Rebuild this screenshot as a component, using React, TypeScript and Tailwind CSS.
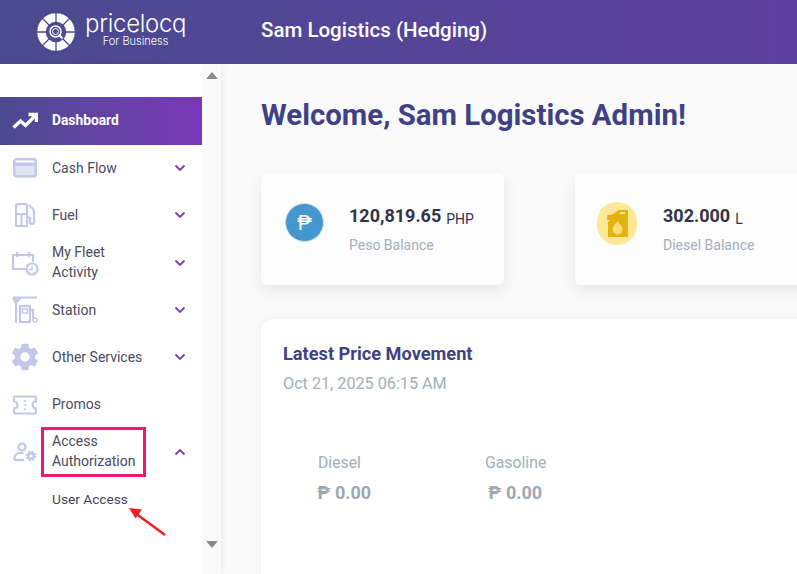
import React from "react";

const ic = "#c3c8e8";
const Chevron = ({ up = false }: { up?: boolean }) => (
  <svg width="12" height="8" viewBox="0 0 12 8" fill="none" stroke="#7a3db5" strokeWidth="1.8" className={up ? "rotate-180" : ""}>
    <path d="M1.5 1.5 6 6l4.5-4.5" />
  </svg>
);

const Trend = () => (
  <svg width="26" height="18" viewBox="0 0 26 18" fill="none" stroke="#fff" strokeWidth="3.4">
    <path d="M1.5 15.5 8.5 9l5 4.5L23 4" />
    <path d="M16.5 2.5H24.500V10" />
  </svg>
);
const CashIcon = () => (
  <svg width="24" height="20" viewBox="0 0 24 20">
    <rect x="1.200" y="1.200" width="21.600" height="17" rx="2" fill="none" stroke={ic} strokeWidth="2.400" />
    <rect x="1" y="4.500" width="22" height="4" fill={ic} />
    <rect x="2" y="9" width="20" height="8" fill={ic} opacity=".5" />
  </svg>
);
const FuelIcon = () => (
  <svg width="22" height="24" viewBox="0 0 22 24" fill="none" stroke={ic} strokeWidth="2.200">
    <path d="M2 23V3a2 2 0 0 1 2-2h7a2 2 0 0 1 2 2v20z" />
    <path d="M2 11h11M7.500 11v12" />
    <path d="M15 2l4 4c1 1 1 2 1 3v10a2 2 0 0 1-4 0v-4l-3-1" />
  </svg>
);
const FleetIcon = () => (
  <svg width="28" height="26" viewBox="0 0 28 26" fill="none" stroke={ic} strokeWidth="2.200">
    <path d="M15 19H2V5h20v7" />
    <path d="M2 5h20M6 2v5M18 2v5M10 5h4" />
    <circle cx="21" cy="19" r="5.500" />
    <path d="M21 16v3.500h-3" strokeWidth="1.500" />
  </svg>
);
const StationIcon = () => (
  <svg width="26" height="28" viewBox="0 0 26 28" fill="none" stroke={ic} strokeWidth="2.200">
    <path d="M1 1.500h24M4 2v25M1 2l3 5 4-5" />
    <rect x="8" y="10" width="10" height="16" />
    <rect x="10.500" y="13" width="5" height="4" strokeWidth="1.500" />
    <path d="M18 14h3v8" />
    <circle cx="23" cy="24" r="2" strokeWidth="1.500" />
  </svg>
);
const GearIcon = () => (
  <svg width="32" height="32" viewBox="0 0 24 24" fill={ic}>
    <path d="M19.43 12.98c.04-.32.07-.64.07-.98s-.03-.66-.07-.98l2.11-1.65c.19-.15.24-.42.12-.64l-2-3.46c-.12-.22-.39-.3-.61-.22l-2.49 1c-.52-.4-1.08-.73-1.69-.98l-.38-2.65A.488.488 0 0 0 14 2h-4c-.25 0-.46.18-.49.42l-.38 2.65c-.61.25-1.17.59-1.69.98l-2.49-1c-.23-.09-.49 0-.61.22l-2 3.46c-.13.22-.07.49.12.64l2.11 1.65c-.04.32-.07.65-.07.98s.03.66.07.98l-2.11 1.65c-.19.15-.24.42-.12.64l2 3.46c.12.22.39.3.61.22l2.49-1c.52.4 1.08.73 1.69.98l.38 2.65c.03.24.24.42.49.42h4c.25 0 .46-.18.49-.42l.38-2.65c.61-.25 1.17-.59 1.69-.98l2.49 1c.23.09.49 0 .61-.22l2-3.46c.12-.22.07-.49-.12-.64l-2.11-1.65zM12 15.500a3.500 3.500 0 1 1 0-7 3.500 3.500 0 0 1 0 7z" />
  </svg>
);
const PromoIcon = () => (
  <svg width="24" height="20" viewBox="0 0 24 20" fill="none" stroke={ic} strokeWidth="2.200">
    <path d="M2 1.500h20a1 1 0 0 1 1 1v4a3.500 3.500 0 0 0 0 7v4a1 1 0 0 1-1 1H2a1 1 0 0 1-1-1v-4a3.500 3.500 0 0 0 0-7v-4a1 1 0 0 1 1-1z" />
    <path d="M12 5v1.500M12 9.200v1.500M12 13.500V15" />
  </svg>
);
const AccessIcon = () => (
  <svg width="24" height="20" viewBox="0 0 24 20" fill="none" stroke={ic} strokeWidth="2.200">
    <circle cx="9" cy="5" r="3.500" />
    <path d="M1.500 18v-2a5 5 0 0 1 5-5h4" />
    <path d="M1.500 18H11" />
    <circle cx="18" cy="14" r="2.800" strokeWidth="2.600" />
    <circle cx="18" cy="14" r="4.600" strokeWidth="1.600" strokeDasharray="2 1.600" />
  </svg>
);

const Logo = () => (
  <svg width="38" height="38" viewBox="0 0 38 38">
    <circle cx="19" cy="19" r="14.500" fill="none" stroke="#fff" strokeWidth="8.500" />
    <g stroke="#4b4791" strokeWidth="1.300">
      <path d="M19 0v9M19 29v9M0 19h9M29 19h9M5.500 5.500l7 7M25.500 25.500l7 7M32.500 5.500l-7 7M12.500 25.500l-7 7" />
    </g>
    <circle cx="18.500" cy="18.500" r="5.500" fill="none" stroke="#fff" strokeWidth="1.500" />
    <circle cx="18.500" cy="18.500" r="3" fill="none" stroke="#fff" strokeWidth="1" />
    <path d="M22 22l3.500 3.500" stroke="#fff" strokeWidth="2" />
  </svg>
);

type Item = { label: React.ReactNode; icon: React.ReactNode; chevron?: boolean; up?: boolean };
const items: Item[] = [
  { label: "Cash Flow", icon: <CashIcon />, chevron: true },
  { label: "Fuel", icon: <FuelIcon />, chevron: true },
  { label: <>My Fleet<br />Activity</>, icon: <FleetIcon />, chevron: true },
  { label: "Station", icon: <StationIcon />, chevron: true },
  { label: "Other Services", icon: <GearIcon />, chevron: true },
  { label: "Promos", icon: <PromoIcon /> },
  { label: <>Access<br />Authorization</>, icon: <AccessIcon />, chevron: true, up: true },
];

export default function App() {
  return (
    <div className="w-[797px] h-[574px] overflow-hidden flex flex-col bg-[#fafafa] font-['Roboto',sans-serif]">
      <header className="h-16 shrink-0 flex items-center bg-gradient-to-r from-[#4a4a8f] to-[#5d3f9f]">
        <div className="w-[261px] shrink-0 flex items-center pl-[37px] gap-[10px]">
          <Logo />
          <div className="flex flex-col items-center text-white -mt-[6px]">
            <span className="text-[24px] font-light font-['Inter',sans-serif] leading-[24px] tracking-[-0.3px]">pricelocq</span>
            <span className="text-[11px] font-light leading-[11px] font-['Inter',sans-serif]">For Business</span>
          </div>
        </div>
        <h1 className="text-white text-[20.500px] font-medium -mt-[4px]">Sam Logistics (Hedging)</h1>
      </header>
      <div className="flex-1 flex min-h-0">
        <aside className="w-[221px] shrink-0 flex bg-white shadow-[2px_0_4px_rgba(0,0,0,0.05)] z-10">
          <nav className="w-[202px] shrink-0 pt-[33px] relative">
            <div className="h-12 flex items-center bg-gradient-to-r from-[#4a4a8f] to-[#7a38b8] pl-[12px]">
              <Trend />
              <span className="ml-[14px] text-[13.800px] font-bold text-white -mt-[2px]">Dashboard</span>
            </div>
            <div className="-mt-[0.500px]">
              {items.map((it, i) => (
                <div key={i} className="h-[47.300px] flex items-center text-sm leading-5 text-[#4a4a5e]">
                  <div className="w-[52px] shrink-0 flex justify-center pr-[2px]">{it.icon}</div>
                  <div className="flex-1 -mt-[1px]">{it.label}</div>
                  {it.chevron && <div className="w-[44px] flex justify-center"><Chevron up={it.up} /></div>}
                </div>
              ))}
            </div>
            <div className="h-[47px] flex items-center pl-[52px] text-[13.700px] text-[#3f4560]">User Access</div>
            <div className="absolute left-[41px] top-[363px] w-[105px] h-[50px] border-[3px] border-[#f0186e]" />
            <svg className="absolute left-[129px] top-[442px]" width="40" height="32" viewBox="0 0 40 32" fill="none">
              <path d="M36 29 6 7" stroke="#ef1c24" strokeWidth="2.400" />
              <path d="M0 2l13 1.500-6.500 9z" fill="#ef1c24" />
            </svg>
          </nav>
          <div className="flex-1 bg-[#fafafa] flex flex-col items-center justify-between pt-[8px] pb-[26px]">
            <div className="w-0 h-0 border-x-[6.500px] border-x-transparent border-b-[7px] border-b-[#8a8a8a]" />
            <div className="w-0 h-0 border-x-[6.500px] border-x-transparent border-t-[7px] border-t-[#8a8a8a]" />
          </div>
        </aside>
        <main className="flex-1 min-w-0 pl-10 pt-[33px] overflow-hidden">
          <h2 className="text-[29.400px] leading-9 font-bold text-[#3f4186] whitespace-nowrap">Welcome, Sam Logistics Admin!</h2>
          <div className="mt-10 flex gap-[71px] w-[700px]">
            <div className="w-[243px] h-28 shrink-0 rounded-md bg-[#fdfdfd] shadow-[0_6px_16px_rgba(0,0,0,0.08)] flex pl-[24px] pt-[30px]">
              <div className="w-[39px] h-[39px] rounded-full bg-[#4697d0] border border-[#cfe4f3] flex items-center justify-center text-white text-xl font-normal">₱</div>
              <div className="ml-[25px] -mt-[1px]">
                <div className="text-[#333349] leading-6 flex items-baseline gap-[5px]"><span className="text-lg font-bold">120,819.65</span><span className="text-sm translate-y-[2px]">PHP</span></div>
                <div className="mt-[5px] text-sm text-[#a3aeba]">Peso Balance</div>
              </div>
            </div>
            <div className="w-[243px] h-28 shrink-0 rounded-md bg-[#fdfdfd] shadow-[0_6px_16px_rgba(0,0,0,0.08)] flex pl-[22px] pt-[30px]">
              <div className="w-10 h-[43px] rounded-full bg-[#fee797] flex items-center justify-center -mt-[1px]">
                <svg width="21" height="27" viewBox="0 0 21 27">
                  <path d="M0 5h3l3-1 6-4h9v27H1V12l2-2H0zM13 2v2h5V2z" fill="#e3b30d" fillRule="evenodd" />
                  <path d="M10.500 11c3 4 5 6 5 8.500a5 5 0 0 1-10 0c0-2.500 2-4.500 5-8.500z" fill="#fddc7c" />
                </svg>
              </div>
              <div className="ml-[26px] -mt-[1px]">
                <div className="text-[#333349] leading-6 flex items-baseline gap-[5px]"><span className="text-lg font-bold">302.000</span><span className="text-sm translate-y-[2px]">L</span></div>
                <div className="mt-[5px] text-sm text-[#a3aeba]">Diesel Balance</div>
              </div>
            </div>
          </div>
          <section className="mt-[34px] w-[700px] h-[400px] rounded-xl bg-white shadow-[0_0_10px_rgba(0,0,0,0.05)] pl-[22px] pt-[25px]">
            <h3 className="text-[18.200px] leading-5 font-bold text-[#3f4186]">Latest Price Movement</h3>
            <p className="mt-[10px] text-[16.200px] leading-5 text-[#a3aeba]">Oct 21, 2025 06:15 AM</p>
            <div className="mt-[59px] ml-[35px] flex">
              <div className="w-[167px]">
                <div className="text-[15.800px] leading-5 text-[#a3aeba]">Diesel</div>
                <div className="mt-[10px] -ml-[1px] text-lg leading-5 font-bold text-[#9ea9b3]">₱ 0.00</div>
              </div>
              <div>
                <div className="text-[15.800px] leading-5 text-[#a3aeba]">Gasoline</div>
                <div className="mt-[10px] ml-[3px] text-lg leading-5 font-bold text-[#9ea9b3]">₱ 0.00</div>
              </div>
            </div>
          </section>
        </main>
      </div>
    </div>
  );
}
